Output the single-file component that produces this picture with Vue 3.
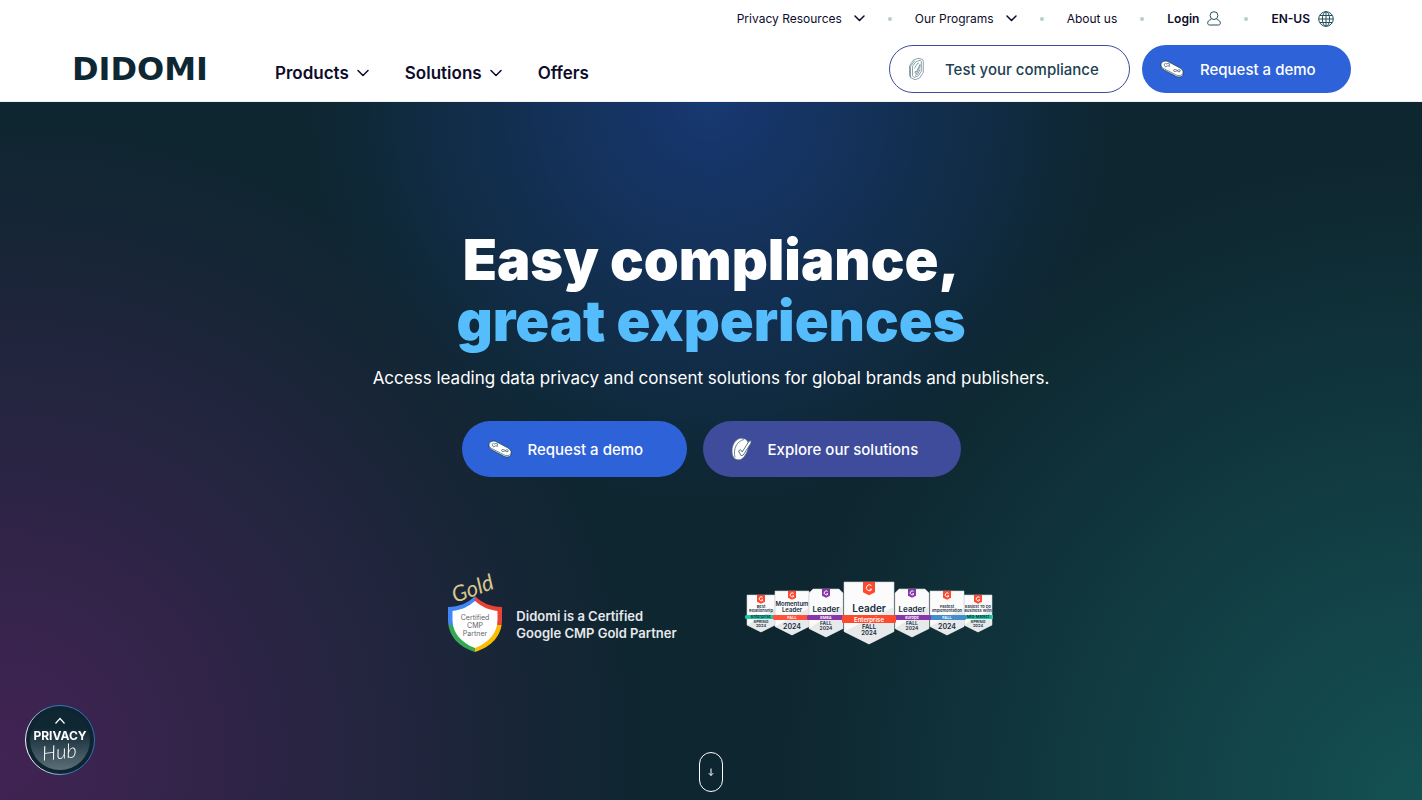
<script setup>
const badges = [
  { cx: 760, half: 14, top: 595, bottom: 632, ribbon: 4, color: '#20c5a2', tag: '#ff492c', title: ['Best', 'Relationship'], titleSize: 4, label: 'Enterprise', labelFill: '#0b2b3a', foot: ['SPRING', '2024'], footSize: 4 },
  { cx: 977, half: 14, top: 595, bottom: 632, ribbon: 4, color: '#20c5a2', tag: '#ff492c', title: ['Easiest To Do', 'Business With'], titleSize: 4, label: 'Mid-Market', labelFill: '#0b2b3a', foot: ['SPRING', '2024'], footSize: 4 },
  { cx: 791, half: 17, top: 591, bottom: 635, ribbon: 5, color: '#ff5238', tag: '#ff492c', title: ['Momentum', 'Leader'], titleSize: 6, label: 'FALL', labelFill: '#fff', foot: ['2024'], footSize: 7 },
  { cx: 946, half: 17, top: 591, bottom: 635, ribbon: 5, color: '#438dcc', tag: '#ff492c', title: ['Fastest', 'Implementation'], titleSize: 4, label: 'FALL', labelFill: '#fff', foot: ['2024'], footSize: 7 },
  { cx: 825, half: 17, top: 589, bottom: 637, ribbon: 5, cut: 4, color: '#8b36a8', tag: '#8b36a8', title: ['Leader'], titleSize: 8, label: 'EMEA', labelFill: '#fff', foot: ['FALL', '2024'], footSize: 5 },
  { cx: 911, half: 17, top: 589, bottom: 637, ribbon: 5, cut: 4, color: '#8b36a8', tag: '#8b36a8', title: ['Leader'], titleSize: 8, label: 'Europe', labelFill: '#fff', foot: ['FALL', '2024'], footSize: 5 },
  { cx: 868, half: 25, top: 582, bottom: 644, ribbon: 8, color: '#ff492c', tag: '#ff492c', title: ['Leader'], titleSize: 10, label: 'Enterprise', labelFill: '#fff', foot: ['FALL', '2024'], footSize: 6 }
]

const shoulder = (b) => b.bottom - b.half * 0.5
const outline = (b) => {
  const c = b.cut || 0
  const l = b.cx - b.half
  const r = b.cx + b.half
  return `M${l} ${b.top + c}L${l + c} ${b.top}H${r - c}L${r} ${b.top + c}V${shoulder(b)}L${b.cx} ${b.bottom}L${l} ${shoulder(b)}Z`
}
const shade = (b) =>
  `M${b.cx + b.half} ${b.top + b.half}V${shoulder(b)}L${b.cx} ${b.bottom}L${b.cx - b.half} ${shoulder(b)}Z`
const tagWidth = (b) => (b.half > 20 ? 6 : 4)
const tagPath = (b) => {
  const w = tagWidth(b)
  return `M${b.cx - w} ${b.top}h${w * 2}v${w * 1.7}l-${w} ${w / 2}l-${w} -${w / 2}z`
}
const tagMark = (b) => {
  const w = tagWidth(b)
  const y = b.top + w
  return `M${b.cx + w * 0.4} ${y - w * 0.4}A${w * 0.5} ${w * 0.5} 0 1 0 ${b.cx + w * 0.5} ${y + w * 0.2}h-${w * 0.4}`
}
const titleY = (b, i) => 612 - (b.title.length - 1 - i) * (b.titleSize > 5 ? 6 : 4)
const footY = (b, i) => 615 + b.ribbon + b.footSize + (b.foot.length === 1 ? 2 : 0) + i * b.footSize
</script>

<template>
  <div class="page">
    <header class="header">
      <nav class="topbar" aria-label="Secondary">
        <button class="toplink" type="button">
          Privacy Resources
          <svg class="chev" width="11" height="7" viewBox="0 0 11 7"><path d="M1 1l4.500 4.500L10 1" /></svg>
        </button>
        <i class="dot"></i>
        <button class="toplink" type="button">
          Our Programs
          <svg class="chev" width="11" height="7" viewBox="0 0 11 7"><path d="M1 1l4.500 4.500L10 1" /></svg>
        </button>
        <i class="dot"></i>
        <a class="toplink" href="#about">About us</a>
        <i class="dot"></i>
        <a class="toplink strong" href="#login">
          Login
          <svg class="line" width="14" height="15" viewBox="0 0 14 15"><circle cx="7" cy="4.600" r="3.900" /><path d="M4.200 8.600C2 8.800.7 10.300.7 12.100.7 13.400 1.400 14 2.600 14h8.800c1.200 0 1.900-.6 1.900-1.900 0-1.800-1.300-3.300-3.500-3.500" /></svg>
        </a>
        <i class="dot"></i>
        <button class="toplink strong" type="button">
          EN-US
          <svg class="line" width="16" height="16" viewBox="0 0 16 16"><circle cx="8" cy="8" r="7.300" /><ellipse cx="8" cy="8" rx="3.600" ry="7.300" /><path d="M8 .7v14.600M.7 8h14.600M2 4.500h12M2 11.500h12" /></svg>
        </button>
      </nav>
      <div class="mainbar">
        <a class="logo" href="#home">DIDOMI</a>
        <nav class="nav" aria-label="Main">
          <button class="navlink" type="button">
            Products
            <svg class="chev" width="12" height="8" viewBox="0 0 12 8"><path d="M1 1.500l5 5 5-5" /></svg>
          </button>
          <button class="navlink" type="button">
            Solutions
            <svg class="chev" width="12" height="8" viewBox="0 0 12 8"><path d="M1 1.500l5 5 5-5" /></svg>
          </button>
          <a class="navlink" href="#offers">Offers</a>
        </nav>
        <div class="ctas">
          <a class="btn outline" href="#test">
            <svg width="17" height="24" viewBox="0 0 17 24" fill="none" stroke="#5c7b87" stroke-width=".7">
              <path d="M1.500 9L5 3.500 10 1.200l4.500 1.300.8 2v11L11.500 21 7 22.800 2.500 20.500l-1-2z" />
              <path d="M4.500 9.500L7.500 5 12 3.200l1.300 1.500v9.500l-3 4.600L6 20.500 4.500 18.500z" />
              <path d="M2.500 20V9.500L6.500 3.800M7 14.500l1.300.3L12 7.500v2.300L8.500 16.500 7 16z" />
              <path d="M6.500 11.500L9 7l2-1M12 12.500L9.800 17l-2.800 1.500" />
            </svg>
            <span>Test your compliance</span>
          </a>
          <a class="btn blue head" href="#demo">
            <svg width="24" height="18" viewBox="0 0 24 18">
              <path d="M1 4C1.800 1.200 5.500.2 8.500 1.800l11.200 6c2.500 1.400 3.800 3.100 3.300 5v2c-.8 2.500-4.500 2.800-7.500 1.300L4 10C1.800 8.800.8 7.400 1 5.600z" fill="#fff" stroke="#17394a" stroke-width=".7" />
              <g fill="none" stroke="#17394a" stroke-width=".6"><path d="M1.200 5.800c.4 1.300 1.400 2.200 3 3l11.300 5.900c3 1.500 6.200 1.200 7.400-1" /><path d="M4 4.500l1.500-1.200L7 4.200l1-1.200 1.800 1-1 1 1 1.200-2.500-.3L5.500 7z" /><ellipse cx="15.200" cy="10.500" rx="1.700" ry="1" /><ellipse cx="18.900" cy="10.800" rx="1.500" ry="1" /></g>
            </svg>
            <span>Request a demo</span>
          </a>
        </div>
      </div>
    </header>

    <main class="hero">
      <h1><span class="first">Easy compliance,</span><span class="second">great experiences</span></h1>
      <p class="lead">Access leading data privacy and consent solutions for global brands and publishers.</p>
      <div class="actions">
        <a class="btn blue big" href="#demo">
          <svg width="24" height="18" viewBox="0 0 24 18">
            <path d="M1 4C1.800 1.200 5.500.2 8.500 1.800l11.200 6c2.500 1.400 3.800 3.100 3.300 5v2c-.8 2.500-4.500 2.800-7.500 1.300L4 10C1.800 8.800.8 7.400 1 5.600z" fill="#fff" stroke="#17394a" stroke-width=".7" />
            <g fill="none" stroke="#17394a" stroke-width=".6"><path d="M1.200 5.800c.4 1.300 1.400 2.200 3 3l11.300 5.900c3 1.500 6.200 1.200 7.400-1" /><path d="M4 4.500l1.500-1.200L7 4.200l1-1.200 1.800 1-1 1 1 1.200-2.500-.3L5.500 7z" /><ellipse cx="15.200" cy="10.500" rx="1.700" ry="1" /><ellipse cx="18.900" cy="10.800" rx="1.500" ry="1" /></g>
          </svg>
          <span>Request a demo</span>
        </a>
        <a class="btn violet big" href="#solutions">
          <svg width="21" height="24" viewBox="0 0 21 24">
            <path d="M1 14C1 7 5 1.500 10 1.200c3-.2 5 .8 6.500 2.800C19 9 16 17 12 21c-3 2.500-6 2.300-8.500.5C1.500 20 1 17 1 14z" fill="#fff" stroke="#4d6a7a" stroke-width=".7" />
            <path d="M4 20.500C1.800 12 6 4 13 2.500" fill="none" stroke="#4d6a7a" stroke-width=".8" />
            <path d="M7.500 14l2-1.300 1.700 2.300L18 4.200l2-.7v2.500l-7.700 12-2.300.7z" fill="#fff" stroke="#4d6a7a" stroke-width=".9" />
          </svg>
          <span>Explore our solutions</span>
        </a>
      </div>

      <div class="awards">
        <div class="google">
          <svg width="56" height="94" viewBox="447 567 56 94" aria-label="Gold Certified CMP Partner">
            <defs>
              <clipPath id="shield"><path d="M475 597c7 7 16 11 27 11v13c0 16-11 27-27 32-16-5-27-16-27-32v-13c11 0 20-4 27-11z" /></clipPath>
            </defs>
            <g clip-path="url(#shield)">
              <rect x="447" y="596" width="28" height="30" fill="#4285f4" />
              <rect x="475" y="596" width="28" height="30" fill="#ea4335" />
              <rect x="447" y="626" width="28" height="28" fill="#34a853" />
              <rect x="475" y="626" width="28" height="28" fill="#fbbc04" />
            </g>
            <path d="M475 602c7 6 14 9 22.500 10v9c0 13-9 23-22.500 28-13.500-5-22.500-15-22.500-28v-9c8.500-1 15.500-4 22.500-10z" fill="#fff" />
            <g class="shieldtext" text-anchor="middle" fill="#5f6368">
              <text x="475" y="621">Certified</text><text x="475" y="629">CMP</text><text x="475" y="637">Partner</text>
            </g>
            <text class="gold" x="455" y="604" transform="rotate(-20 455 604)" fill="#d9c78b">Gold</text>
          </svg>
          <p>Didomi is a Certified<br />Google CMP Gold Partner</p>
        </div>

        <svg class="g2" width="248" height="66" viewBox="744 580 248 66" aria-label="G2 awards">
          <g v-for="(b, i) in badges" :key="i">
            <path :d="outline(b)" fill="#fbfbfc" stroke="#c9ced2" stroke-width=".6" />
            <path :d="shade(b)" fill="#e7e9eb" />
            <path :d="tagPath(b)" :fill="b.tag" />
            <path :d="tagMark(b)" fill="none" stroke="#fff" stroke-width="1" />
            <rect :x="b.cx - b.half - 2" y="615" :width="b.half * 2 + 4" :height="b.ribbon" rx="1.500" :fill="b.color" />
            <g text-anchor="middle" fill="#172c3d">
              <text v-for="(t, n) in b.title" :key="t" :x="b.cx" :y="titleY(b, n)" :font-size="b.titleSize">{{ t }}</text>
              <text :x="b.cx" :y="614 + b.ribbon" :font-size="b.ribbon > 5 ? 6 : 4" :fill="b.labelFill">{{ b.label }}</text>
              <text v-for="(t, n) in b.foot" :key="t" :x="b.cx" :y="footY(b, n)" :font-size="b.footSize">{{ t }}</text>
            </g>
          </g>
        </svg>
      </div>

      <a class="scroll" href="#more" aria-label="Scroll down">
        <svg width="24" height="40" viewBox="0 0 24 40" fill="none" stroke="#fff"><rect x=".5" y=".5" width="23" height="39" rx="11.500" /><path d="M12 16.500v7M9.800 21.200l2.200 2.300 2.200-2.300" /></svg>
      </a>
    </main>

    <button class="hub" type="button" aria-label="Privacy Hub">
      <svg width="70" height="70" viewBox="0 0 70 70">
        <defs>
          <linearGradient id="ring" x1="0" y1="0.600" x2="1" y2="0.300"><stop offset="0" stop-color="#fff" /><stop offset=".5" stop-color="#2e7fb5" /><stop offset="1" stop-color="#2575ad" /></linearGradient>
          <linearGradient id="disc" x1="0" y1="0" x2="0" y2="1"><stop offset=".3" stop-color="#0e2733" /><stop offset="1" stop-color="#5c6f78" /></linearGradient>
        </defs>
        <circle cx="35" cy="35" r="34.500" fill="#0e2430" stroke="url(#ring)" />
        <circle cx="35" cy="35" r="30" fill="url(#disc)" />
        <path d="M30.500 18.500l4.500-5 4.500 5" fill="none" stroke="#fff" stroke-width="1.200" />
        <text class="hubtitle" x="35" y="35" text-anchor="middle" fill="#fff">PRIVACY</text>
        <text class="hubscript" x="35" y="54" text-anchor="middle" fill="#fff" transform="rotate(-6 35 54)">Hub</text>
      </svg>
    </button>
  </div>
</template>

<style>
body {
  margin: 0;
}
</style>

<style scoped>
.page {
  min-height: 100vh;
  display: flex;
  flex-direction: column;
  font-family: Inter, "Open Sans", sans-serif;
  color: #0d0c2b;
}
a {
  color: inherit;
  text-decoration: none;
}
button {
  font: inherit;
  color: inherit;
  background: none;
  border: 0;
  padding: 0;
  cursor: pointer;
}
svg {
  display: block;
  flex: none;
}
.header {
  background: #fff;
  border-bottom: 1px solid #f1f1f3;
}
.topbar {
  height: 37px;
  padding-right: 88px;
  display: flex;
  align-items: center;
  justify-content: flex-end;
  gap: 23px;
}
.toplink {
  display: flex;
  align-items: center;
  gap: 12px;
  font-size: 12px;
  line-height: 16px;
}
.toplink.strong {
  gap: 8px;
  font-weight: 600;
}
.dot {
  width: 4px;
  height: 4px;
  border-radius: 50%;
  background: #b5cbd2;
}
.chev {
  fill: none;
  stroke: #0d0c2b;
  stroke-width: 1.5;
  stroke-linecap: round;
  stroke-linejoin: round;
}
.line {
  fill: none;
  stroke: #24505f;
}
.mainbar {
  display: flex;
  align-items: center;
  min-height: 48px;
  padding: 8px 71px 8px 72px;
}
.logo {
  width: 203px;
  font-family: "DejaVu Sans", sans-serif;
  font-size: 32px;
  line-height: 40px;
  font-weight: 700;
  color: #0d2733;
}
.nav {
  display: flex;
  gap: 36px;
  padding-top: 8px;
}
.navlink {
  display: flex;
  align-items: center;
  gap: 8px;
  font-size: 17px;
  line-height: 24px;
  font-weight: 600;
}
.ctas {
  margin-left: auto;
  display: flex;
  gap: 12px;
}
.btn {
  box-sizing: border-box;
  display: flex;
  align-items: center;
  gap: 16px;
  height: 48px;
  padding: 0 18px;
  border-radius: 28px;
  font-size: 15px;
  font-weight: 500;
  white-space: nowrap;
}
.btn.outline {
  min-width: 241px;
  gap: 20px;
  border: 1px solid #3e4c9b;
  color: #1c4152;
}
.btn.head {
  min-width: 209px;
}
.btn.blue {
  background: #2e62d9;
  color: #fff;
}
.btn.big {
  height: 56px;
  padding: 0 26px;
  min-width: 225px;
}
.btn.violet {
  background: #3e4c9b;
  color: #fff;
  min-width: 258px;
  padding: 0 28px;
}
.hero {
  flex: 1;
  display: flex;
  flex-direction: column;
  align-items: center;
  padding: 128px 0 8px;
  color: #fff;
  background:
    radial-gradient(circle 400px at 50% 0, #173872 0%, rgba(23, 56, 114, 0) 100%),
    radial-gradient(circle 640px at 0 94%, #422354 0%, rgba(66, 35, 84, 0) 100%),
    radial-gradient(circle 640px at 100% 100%, #145153 0%, rgba(20, 81, 83, 0) 100%),
    #0e2630;
}
h1 {
  margin: 0;
  font-size: 56px;
  line-height: 61px;
  font-weight: 900;
  text-align: center;
}
h1 span {
  display: block;
}
.second {
  color: #56bdfc;
}
.lead {
  margin: 14px 0 0;
  font-size: 17px;
  line-height: 24px;
  text-align: center;
}
.actions {
  display: flex;
  gap: 16px;
  margin-top: 31px;
}
.awards {
  display: flex;
  align-items: center;
  gap: 68px;
  margin-top: 89px;
  padding-left: 18px;
}
.google {
  display: flex;
  align-items: center;
  gap: 13px;
}
.google p {
  margin: 24px 0 0;
  font-size: 13px;
  line-height: 17px;
  font-weight: 600;
  color: #e6e9ec;
}
.shieldtext {
  font-size: 7px;
}
.gold {
  font-family: Lato, sans-serif;
  font-style: italic;
  font-size: 22px;
}
.g2 {
  font-weight: 600;
}
.scroll {
  margin-top: auto;
}
.hub {
  position: fixed;
  left: 25px;
  bottom: 25px;
}
.hubtitle {
  font-size: 12px;
  font-weight: 700;
}
.hubscript {
  font-family: Lato, sans-serif;
  font-style: italic;
  font-weight: 300;
  font-size: 20px;
}
</style>
